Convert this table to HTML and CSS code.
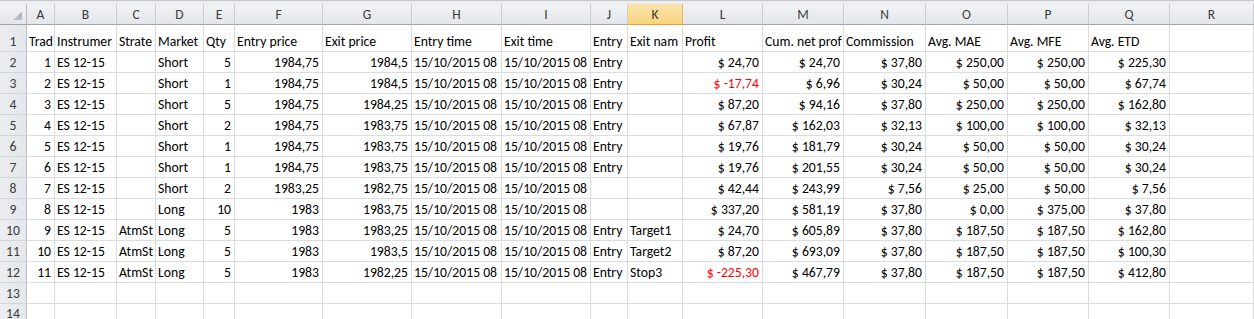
FILE: index.html
```html
<!DOCTYPE html>
<html>
<head>
<meta charset="utf-8">
<link rel="stylesheet" href="styles.css">
</head>
<body>
<div class="sheet">
  <div class="topbar"></div>
  <div class="row colhead">
    <div class="corner"></div>
    <div class="ch">A</div><div class="ch">B</div><div class="ch">C</div><div class="ch">D</div><div class="ch">E</div><div class="ch">F</div><div class="ch">G</div><div class="ch">H</div><div class="ch">I</div><div class="ch">J</div><div class="ch sel">K</div><div class="ch">L</div><div class="ch">M</div><div class="ch">N</div><div class="ch">O</div><div class="ch">P</div><div class="ch">Q</div><div class="ch">R</div>
  </div>
  <div class="row first">
    <div class="rh">1</div>
    <div class="c">Trad</div><div class="c">Instrumer</div><div class="c">Strate</div><div class="c">Market</div><div class="c">Qty</div><div class="c">Entry price</div><div class="c">Exit price</div><div class="c">Entry time</div><div class="c">Exit time</div><div class="c">Entry</div><div class="c">Exit nam</div><div class="c">Profit</div><div class="c">Cum. net prof</div><div class="c">Commission</div><div class="c">Avg. MAE</div><div class="c">Avg. MFE</div><div class="c">Avg. ETD</div><div class="c"></div>
  </div>
  <div class="row">
    <div class="rh">2</div>
    <div class="c n">1</div><div class="c">ES 12-15</div><div class="c"></div><div class="c">Short</div><div class="c n">5</div><div class="c n">1984,75</div><div class="c n">1984,5</div><div class="c">15/10/2015 08</div><div class="c">15/10/2015 08</div><div class="c">Entry</div><div class="c"></div><div class="c n">$ 24,70</div><div class="c n">$ 24,70</div><div class="c n">$ 37,80</div><div class="c n">$ 250,00</div><div class="c n">$ 250,00</div><div class="c n">$ 225,30</div><div class="c"></div>
  </div>
  <div class="row">
    <div class="rh">3</div>
    <div class="c n">2</div><div class="c">ES 12-15</div><div class="c"></div><div class="c">Short</div><div class="c n">1</div><div class="c n">1984,75</div><div class="c n">1984,5</div><div class="c">15/10/2015 08</div><div class="c">15/10/2015 08</div><div class="c">Entry</div><div class="c"></div><div class="c n neg">$ -17,74</div><div class="c n">$ 6,96</div><div class="c n">$ 30,24</div><div class="c n">$ 50,00</div><div class="c n">$ 50,00</div><div class="c n">$ 67,74</div><div class="c"></div>
  </div>
  <div class="row">
    <div class="rh">4</div>
    <div class="c n">3</div><div class="c">ES 12-15</div><div class="c"></div><div class="c">Short</div><div class="c n">5</div><div class="c n">1984,75</div><div class="c n">1984,25</div><div class="c">15/10/2015 08</div><div class="c">15/10/2015 08</div><div class="c">Entry</div><div class="c"></div><div class="c n">$ 87,20</div><div class="c n">$ 94,16</div><div class="c n">$ 37,80</div><div class="c n">$ 250,00</div><div class="c n">$ 250,00</div><div class="c n">$ 162,80</div><div class="c"></div>
  </div>
  <div class="row">
    <div class="rh">5</div>
    <div class="c n">4</div><div class="c">ES 12-15</div><div class="c"></div><div class="c">Short</div><div class="c n">2</div><div class="c n">1984,75</div><div class="c n">1983,75</div><div class="c">15/10/2015 08</div><div class="c">15/10/2015 08</div><div class="c">Entry</div><div class="c"></div><div class="c n">$ 67,87</div><div class="c n">$ 162,03</div><div class="c n">$ 32,13</div><div class="c n">$ 100,00</div><div class="c n">$ 100,00</div><div class="c n">$ 32,13</div><div class="c"></div>
  </div>
  <div class="row">
    <div class="rh">6</div>
    <div class="c n">5</div><div class="c">ES 12-15</div><div class="c"></div><div class="c">Short</div><div class="c n">1</div><div class="c n">1984,75</div><div class="c n">1983,75</div><div class="c">15/10/2015 08</div><div class="c">15/10/2015 08</div><div class="c">Entry</div><div class="c"></div><div class="c n">$ 19,76</div><div class="c n">$ 181,79</div><div class="c n">$ 30,24</div><div class="c n">$ 50,00</div><div class="c n">$ 50,00</div><div class="c n">$ 30,24</div><div class="c"></div>
  </div>
  <div class="row">
    <div class="rh">7</div>
    <div class="c n">6</div><div class="c">ES 12-15</div><div class="c"></div><div class="c">Short</div><div class="c n">1</div><div class="c n">1984,75</div><div class="c n">1983,75</div><div class="c">15/10/2015 08</div><div class="c">15/10/2015 08</div><div class="c">Entry</div><div class="c"></div><div class="c n">$ 19,76</div><div class="c n">$ 201,55</div><div class="c n">$ 30,24</div><div class="c n">$ 50,00</div><div class="c n">$ 50,00</div><div class="c n">$ 30,24</div><div class="c"></div>
  </div>
  <div class="row">
    <div class="rh">8</div>
    <div class="c n">7</div><div class="c">ES 12-15</div><div class="c"></div><div class="c">Short</div><div class="c n">2</div><div class="c n">1983,25</div><div class="c n">1982,75</div><div class="c">15/10/2015 08</div><div class="c">15/10/2015 08</div><div class="c"></div><div class="c"></div><div class="c n">$ 42,44</div><div class="c n">$ 243,99</div><div class="c n">$ 7,56</div><div class="c n">$ 25,00</div><div class="c n">$ 50,00</div><div class="c n">$ 7,56</div><div class="c"></div>
  </div>
  <div class="row">
    <div class="rh">9</div>
    <div class="c n">8</div><div class="c">ES 12-15</div><div class="c"></div><div class="c">Long</div><div class="c n">10</div><div class="c n">1983</div><div class="c n">1983,75</div><div class="c">15/10/2015 08</div><div class="c">15/10/2015 08</div><div class="c"></div><div class="c"></div><div class="c n">$ 337,20</div><div class="c n">$ 581,19</div><div class="c n">$ 37,80</div><div class="c n">$ 0,00</div><div class="c n">$ 375,00</div><div class="c n">$ 37,80</div><div class="c"></div>
  </div>
  <div class="row">
    <div class="rh">10</div>
    <div class="c n">9</div><div class="c">ES 12-15</div><div class="c">AtmSt</div><div class="c">Long</div><div class="c n">5</div><div class="c n">1983</div><div class="c n">1983,25</div><div class="c">15/10/2015 08</div><div class="c">15/10/2015 08</div><div class="c">Entry</div><div class="c">Target1</div><div class="c n">$ 24,70</div><div class="c n">$ 605,89</div><div class="c n">$ 37,80</div><div class="c n">$ 187,50</div><div class="c n">$ 187,50</div><div class="c n">$ 162,80</div><div class="c"></div>
  </div>
  <div class="row">
    <div class="rh">11</div>
    <div class="c n">10</div><div class="c">ES 12-15</div><div class="c">AtmSt</div><div class="c">Long</div><div class="c n">5</div><div class="c n">1983</div><div class="c n">1983,5</div><div class="c">15/10/2015 08</div><div class="c">15/10/2015 08</div><div class="c">Entry</div><div class="c">Target2</div><div class="c n">$ 87,20</div><div class="c n">$ 693,09</div><div class="c n">$ 37,80</div><div class="c n">$ 187,50</div><div class="c n">$ 187,50</div><div class="c n">$ 100,30</div><div class="c"></div>
  </div>
  <div class="row">
    <div class="rh">12</div>
    <div class="c n">11</div><div class="c">ES 12-15</div><div class="c">AtmSt</div><div class="c">Long</div><div class="c n">5</div><div class="c n">1983</div><div class="c n">1982,25</div><div class="c">15/10/2015 08</div><div class="c">15/10/2015 08</div><div class="c">Entry</div><div class="c">Stop3</div><div class="c n neg">$ -225,30</div><div class="c n">$ 467,79</div><div class="c n">$ 37,80</div><div class="c n">$ 187,50</div><div class="c n">$ 187,50</div><div class="c n">$ 412,80</div><div class="c"></div>
  </div>
  <div class="row">
    <div class="rh">13</div>
    <div class="c"></div><div class="c"></div><div class="c"></div><div class="c"></div><div class="c"></div><div class="c"></div><div class="c"></div><div class="c"></div><div class="c"></div><div class="c"></div><div class="c"></div><div class="c"></div><div class="c"></div><div class="c"></div><div class="c"></div><div class="c"></div><div class="c"></div><div class="c"></div>
  </div>
  <div class="row last">
    <div class="rh">14</div>
    <div class="c"></div><div class="c"></div><div class="c"></div><div class="c"></div><div class="c"></div><div class="c"></div><div class="c"></div><div class="c"></div><div class="c"></div><div class="c"></div><div class="c"></div><div class="c"></div><div class="c"></div><div class="c"></div><div class="c"></div><div class="c"></div><div class="c"></div><div class="c"></div>
  </div>
</div>
</body>
</html>
```
FILE: styles.css
```css
html, body {
  margin: 0;
  padding: 0;
  background: #ffffff;
  overflow: hidden;
}
body {
  font-family: "Carlito", "Lato", "Liberation Sans", sans-serif;
  font-size: 13.7px;
  color: #000;
}
.sheet {
  width: 1254px;
  height: 319px;
  overflow: hidden;
}
.topbar {
  height: 4px;
  box-sizing: border-box;
  background: #eceef1;
  border-top: 1px solid #c3c7cc;
}
.row {
  display: grid;
  grid-template-columns: 27px 28px 62px 39px 48px 31px 88px 89px 90px 89px 37px 55px 80px 81px 82px 82px 81px 81px 1fr;
  height: 21px;
}
.row.first {
  height: 27px;
}
.row.last .rh {
  align-items: flex-start;
  padding-top: 2px;
  padding-bottom: 0;
}
.colhead {
  height: 21px;
}
.corner {
  box-sizing: border-box;
  background: linear-gradient(#f1f3f5, #e3e6ea);
  border-right: 1px solid #b9bec5;
  border-bottom: 1px solid #9fa5ad;
  display: flex;
  justify-content: flex-end;
  align-items: flex-end;
  padding: 0 4px 4px 0;
}
.corner::after {
  content: "";
  width: 9px;
  height: 9px;
  background: linear-gradient(to bottom right, transparent 50%, #b8bcc2 50%);
}
.ch {
  box-sizing: border-box;
  background: linear-gradient(#f1f3f5, #e3e6ea);
  border-right: 1px solid #c9cdd2;
  border-bottom: 1px solid #9fa5ad;
  display: flex;
  align-items: center;
  justify-content: center;
  color: #3b3b3b;
  font-size: 13.5px;
  padding-top: 1px;
}
.ch.sel {
  background: linear-gradient(#fbe5ad, #f8d47c);
  border-right: 1px solid #e7b75a;
  border-bottom: 1px solid #f29d38;
  color: #3b3b3b;
}
.rh {
  box-sizing: border-box;
  background: linear-gradient(90deg, #eceef1, #e4e7eb);
  border-right: 1px solid #b9bec5;
  border-bottom: 1px solid #d3d7dc;
  display: flex;
  align-items: flex-end;
  justify-content: center;
  color: #3b3b3b;
  padding-bottom: 2px;
  line-height: 15px;
}
.c {
  box-sizing: border-box;
  border-right: 1px solid #dadcdd;
  border-bottom: 1px solid #dadcdd;
  display: flex;
  align-items: flex-end;
  padding: 0 2px 2px 2px;
  white-space: nowrap;
  overflow: hidden;
  line-height: 15px;
}
.c.n {
  justify-content: flex-end;
  padding-right: 3px;
}
.c.neg {
  color: #ff0000;
}
```
